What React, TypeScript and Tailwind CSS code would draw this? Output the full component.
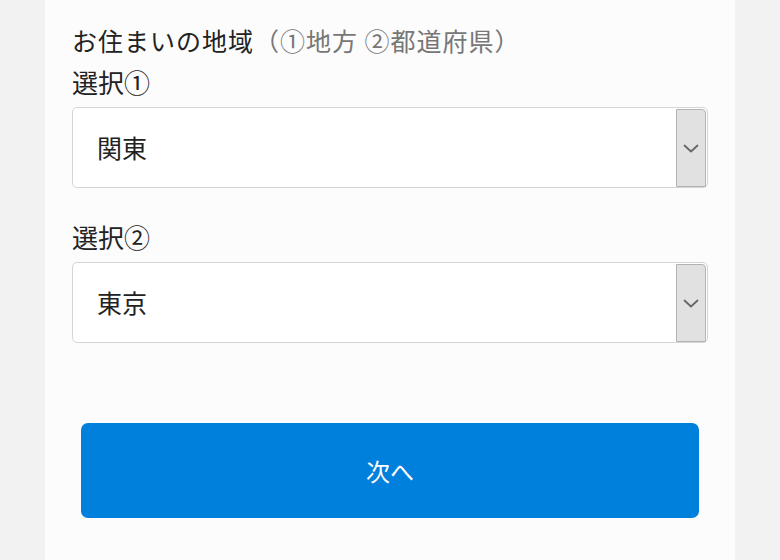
import React from 'react';

const font = { fontFamily: '"Noto Sans CJK JP", "Noto Sans", sans-serif' };

interface SelectBoxProps {
  value: string;
}

const ChevronDown = () => (
  <svg width="16" height="9" viewBox="0 0 16 9" fill="none">
    <path d="M1.5 1.5 L8 7.5 L14.5 1.5" stroke="#666" strokeWidth="1.8" strokeLinecap="round" strokeLinejoin="round" />
  </svg>
);

// fake select, native one can't be styled like this
const SelectBox = ({ value }: SelectBoxProps) => (
  <div className="flex h-[81px] rounded-[5px] border border-[#d5d5d5] bg-white">
    <div className="flex flex-1 items-center pl-[24px] text-[25px] text-[#222]">{value}</div>
    <div className="mt-[1px] mr-[1px] flex w-[30px] items-center justify-center rounded-tr-[4px] border border-[#b3b3b3] bg-[#e1e1e1]">
      <ChevronDown />
    </div>
  </div>
);

const App = () => {
  return (
    <div className="min-h-screen bg-[#f2f2f2]" style={font}>
      <div className="mx-auto min-h-screen w-[690px] bg-[#fcfcfc] px-[27px] pt-[22px]">
        <h2 className="text-[25px] leading-[36px] tracking-[1px] text-[#222] font-normal">
          お住まいの地域<span className="text-[#777]">（①地方 ②都道府県）</span>
        </h2>
        <div className="mt-[6px]">
          <label className="block text-[26px] leading-[36px] text-[#222]">選択①</label>
          <div className="mt-[7px]">
            <SelectBox value="関東" />
          </div>
        </div>
        <div className="mt-[31px]">
          <label className="block text-[26px] leading-[36px] text-[#222]">選択②</label>
          <div className="mt-[7px]">
            <SelectBox value="東京" />
          </div>
        </div>
        <div className="mt-[80px] px-[9px]">
          <button className="flex h-[95px] w-full items-center justify-center rounded-[7px] bg-[#0080dd] text-[24px] text-white">
            次へ
          </button>
        </div>
      </div>
    </div>
  );
};

export default App;
